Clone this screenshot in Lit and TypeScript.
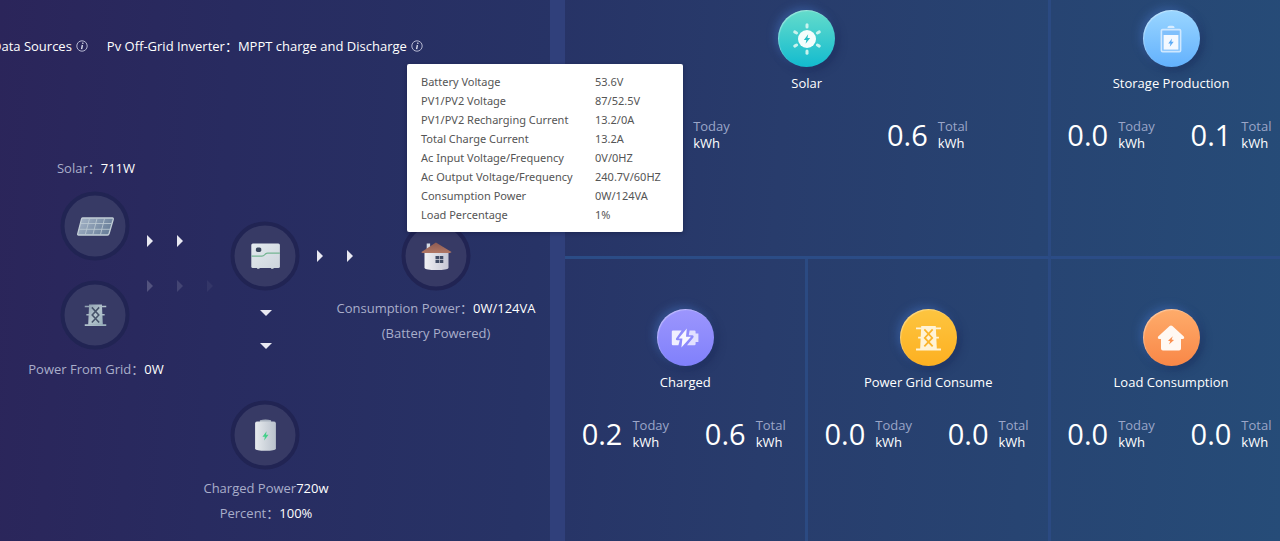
import { LitElement, html, svg, css } from "lit";
import { customElement, property } from "lit/decorators.js";

const boltPath = "M1.5 -6 L-4 1.2 L-0.8 1.2 L-1.8 6 L4 -1.4 L0.6 -1.4 Z";

const pylon = (fill: string, cross: string) => svg`
  <path fill=${fill} d="M5 1 H19 L20 23 H4 Z"/>
  <path fill=${fill} d="M0 2.4 h24 v1.6 h-24z M2 11.4 h20 v1.6 h-20z M0 22.6 h24 v2 h-24z"/>
  <path fill="none" stroke=${cross} stroke-width="1.7" d="M8 4.2 L15.6 12.4 L8 20.6 M16 4.2 L8.4 12.4 L16 20.6"/>`;

const infoIcon = html`
  <svg viewBox="0 0 12 12" width="12" height="12" aria-hidden="true">
    <circle cx="6" cy="6" r="5.2" fill="none" stroke="#b4b6d0" stroke-width="1"/>
    <path d="M6.9 2.6 L6.7 3.8 M6.4 5 L5.6 9.2" stroke="#d8daea" stroke-width="1.4" fill="none"/>
  </svg>`;

const nodeIcons: Record<string, unknown> = {
  solar: html`
    <svg viewBox="0 0 38 20" width="38" height="20" aria-hidden="true">
      <defs><linearGradient id="pv" x1="0" y1="0" x2="1" y2="0.4">
        <stop offset="0" stop-color="#a9b7ca"/><stop offset="1" stop-color="#6b819b"/>
      </linearGradient></defs>
      <path d="M6 1.5 H36 Q37 1.5 36.7 3 L32.6 17 Q32.2 18.5 31 18.5 H2 Q0.9 18.5 1.2 17.3 L5 2.6 Q5.2 1.5 6 1.5Z"
        fill="url(#pv)" stroke="#c2ced6" stroke-width="1.3"/>
      <path d="M4 7 H35 M2.6 12.8 H33.6 M13 2 L8.8 18 M20.5 2 L16.4 18 M28 2 L24 18" stroke="#b9c6d0" stroke-width="0.9" fill="none"/>
    </svg>`,
  grid: html`
    <svg viewBox="0 0 24 25" width="22" height="23" aria-hidden="true">
      <defs><linearGradient id="tw" x1="0" y1="0" x2="1" y2="1" gradientUnits="objectBoundingBox">
        <stop offset="0" stop-color="#8c9eae"/><stop offset="0.5" stop-color="#b4c4cd"/><stop offset="1" stop-color="#98afba"/>
      </linearGradient></defs>
      ${pylon("url(#tw)", "#47536a")}
    </svg>`,
  inverter: html`
    <svg viewBox="0 0 30 28" width="30" height="28" aria-hidden="true">
      <defs><linearGradient id="inv" x1="0" y1="0" x2="1" y2="1">
        <stop offset="0" stop-color="#e4ebef"/><stop offset="1" stop-color="#cdd4dc"/>
      </linearGradient></defs>
      <path fill="#aeb6c2" d="M6.6 24 h2.4 v2.6 h-2.4z M20.6 24 h2.4 v2.6 h-2.4z"/>
      <rect x="0.8" y="1" width="28.6" height="24.6" rx="1.6" fill="url(#inv)"/>
      <path d="M1 13.6 H11.4 Q13 13.6 14 12.4 Q15.2 10.6 17 10.6 H29.4" fill="none" stroke="#74b592" stroke-width="1.1"/>
      <rect x="5.4" y="5" width="5.4" height="4.4" rx="1.6" fill="#39465c"/>
    </svg>`,
  house: html`
    <svg viewBox="0 0 32 30" width="32" height="30" aria-hidden="true">
      <defs>
        <linearGradient id="wall" x1="0" y1="0" x2="1" y2="0">
          <stop offset="0" stop-color="#f1f1f4"/><stop offset="1" stop-color="#c5c6d4"/>
        </linearGradient>
        <linearGradient id="roof" x1="0" y1="0" x2="0" y2="1">
          <stop offset="0" stop-color="#8d5a52"/><stop offset="1" stop-color="#b17764"/>
        </linearGradient>
      </defs>
      <path fill="url(#wall)" d="M4 11 H28 V26.4 Q27 28.4 16 28.4 Q5 28.4 4 26.4Z"/>
      <rect x="6.2" y="2" width="3.4" height="8" fill="#d5dbe4"/>
      <path fill="url(#roof)" d="M15.4 1 L31 10.6 Q31 11.4 29 11.4 H2.6 Q0.6 11.4 1 10.4Z"/>
      <path fill="#414c66" d="M15 14.6 h3.6 v3.2 h-3.6z M19.2 14.6 h3.6 v3.2 h-3.6z M15 18.4 h3.6 v3.2 h-3.6z M19.2 18.4 h3.6 v3.2 h-3.6z"/>
    </svg>`,
  battery: html`
    <svg viewBox="0 0 22 33" width="22" height="33" aria-hidden="true">
      <defs><linearGradient id="cell" x1="0" y1="0" x2="1" y2="0">
        <stop offset="0" stop-color="#e6eaed"/><stop offset="1" stop-color="#b9c1cc"/>
      </linearGradient></defs>
      <path fill="#a9b2bf" d="M5.4 1.8 Q11 0 16.6 1.8 V5 H5.4Z"/>
      <path fill="url(#cell)" d="M0.6 4.4 Q1 3 3 3 H19 Q21 3 21.4 4.4 V30.4 Q20.6 32.2 11 32.2 Q1.4 32.2 0.6 30.4Z"/>
      <path transform="translate(11 17.4) scale(0.76)" fill="#43d089" d=${boltPath}/>
    </svg>`,
};

const cardIcons: Record<string, unknown> = {
  solar: html`
    <svg viewBox="-16 -16 32 32" width="32" height="32" aria-hidden="true">
      <g stroke="#c9f3ee" stroke-width="3" stroke-linecap="round">
        ${[0, 60, 120, 180, 240, 300].map((a) => svg`<path transform="rotate(${a})" d="M0 -14.2 V-12"/>`)}
      </g>
      <circle r="9" fill="#f4fdfc"/>
      <path transform="scale(0.78)" fill="#27bfc6" d=${boltPath}/>
    </svg>`,
  storage: html`
    <svg viewBox="0 0 22 28" width="22" height="28" aria-hidden="true">
      <path fill="#d9edff" d="M7.4 3 Q7.4 0.8 9.6 0.8 H12.4 Q14.6 0.8 14.6 3Z"/>
      <rect x="1.4" y="4.6" width="19.2" height="22" rx="1.2" fill="#7fc0fc" stroke="#cfe8ff" stroke-width="1.6"/>
      <rect x="3.6" y="10" width="14.8" height="14.6" fill="#f3f9ff"/>
      <path transform="translate(11 17.6) scale(0.68)" fill="#5aaaf6" d=${boltPath}/>
    </svg>`,
  charged: html`
    <svg viewBox="0 0 28 20" width="28" height="20" aria-hidden="true">
      <path fill="#f0efff" d="M0.8 3.6 Q0.8 2.4 2 2.4 H10.6 L5 10.4 Q4.4 12 6 12.2 H8.8 L7.4 17.2 H2 Q0.8 17.2 0.8 16Z"/>
      <path fill="#e2e0ff" d="M18.6 2.4 H23.4 Q24.6 2.4 24.6 3.6 V5.6 H27.4 V14 H24.6 V16 Q24.6 17.2 23.4 17.2 H16 L22.4 9.4 Q23.4 7.6 21.6 7.2 H17.8Z"/>
      <path fill="#f8f7ff" d="M15.8 0.6 L7.6 10.4 H11.4 L10.4 19.4 L20 8.8 H15Z"/>
    </svg>`,
  grid: html`
    <svg viewBox="0 0 24 25" width="25" height="26" aria-hidden="true">${pylon("#fff3d6", "#fbb52c")}</svg>`,
  load: html`
    <svg viewBox="0 0 28 26" width="28" height="26" aria-hidden="true">
      <path fill="#fff8f3" d="M12.6 1 Q14 0.2 15.4 1 L26.8 11.4 Q28 13.6 25.6 14 H24 V23.6 Q24 25.6 22 25.6 H6 Q4 25.6 4 23.6 V14 H2.4 Q0 13.6 1.2 11.4Z"/>
      <path transform="translate(14 15.4) rotate(10) scale(0.72)" fill="#fa8f50" d=${boltPath}/>
    </svg>`,
};

@customElement("energy-card")
class EnergyCard extends LitElement {
  @property() name = "";
  @property() icon = "";
  @property() today = "";
  @property() total = "";

  static styles = css`
    :host { display: block; }
    .card { display: flex; flex-direction: column; align-items: center; padding-top: 50px; }
    .badge {
      display: flex; align-items: center; justify-content: center;
      width: 57px; height: 57px; border-radius: 50%;
      box-shadow: -3px -3px 9px rgba(72, 118, 196, 0.45), 3px 3px 9px rgba(22, 34, 80, 0.5),
        inset 1px 1px 1px rgba(255, 255, 255, 0.35);
    }
    .solar { background: linear-gradient(#65dccb, #12bbcf); }
    .storage { background: linear-gradient(#9ad6ff, #63b1fd); }
    .charged { background: linear-gradient(#9c96fd, #8080fb); }
    .grid { background: linear-gradient(#fdc540, #fdb021); }
    .load { background: linear-gradient(#feac6b, #f98747); }
    .name { margin: 6px 0 0; font-size: 13px; line-height: 20px; font-weight: 400; color: #fff; }
    .stats { display: flex; align-self: stretch; margin-top: 22px; }
    .stat { flex: 1; display: flex; align-items: center; justify-content: center; gap: 10px; }
    .value { font-size: 29px; line-height: 40px; color: #fff; }
    .caption { display: flex; flex-direction: column; font-size: 13px; line-height: 17px; color: #9ba6c8; }
    .unit { color: #fff; }
  `;

  stat(value: string, label: string) {
    return html`<div class="stat">
      <span class="value">${value}</span>
      <span class="caption"><span>${label}</span><span class="unit">kWh</span></span>
    </div>`;
  }

  render() {
    return html`<article class="card">
      <div class="badge ${this.icon}">${cardIcons[this.icon]}</div>
      <h2 class="name">${this.name}</h2>
      <div class="stats">${this.stat(this.today, "Today")}${this.stat(this.total, "Total")}</div>
    </article>`;
  }
}

const readings = [
  ["Battery Voltage", "53.6V"],
  ["PV1/PV2 Voltage", "87/52.5V"],
  ["PV1/PV2 Recharging Current", "13.2/0A"],
  ["Total Charge Current", "13.2A"],
  ["Ac Input Voltage/Frequency", "0V/0HZ"],
  ["Ac Output Voltage/Frequency", "240.7V/60HZ"],
  ["Consumption Power", "0W/124VA"],
  ["Load Percentage", "1%"],
];

@customElement("app-root")
class AppRoot extends LitElement {
  static styles = css`
    :host {
      display: block;
      font-family: "Open Sans", "Noto Sans CJK SC", sans-serif;
      font-size: 13px;
      line-height: 20px;
      color: #fff;
    }
    .page {
      display: flex; height: 100vh; min-height: 541px; overflow: hidden;
      background: linear-gradient(94deg, #2b255a 0%, #282b60 18%, #273366 42%, #283c6c 60%, #264c78 100%);
    }
    .flow { position: relative; flex: 0 0 43%; }
    .head { display: flex; gap: 19px; margin: 36px 0 0 -8px; white-space: nowrap; }
    .source { display: flex; align-items: center; gap: 4px; }
    .info { display: flex; padding: 0; border: 0; background: none; cursor: pointer; }

    .node {
      position: absolute; transform: translate(-50%, -50%); box-sizing: border-box;
      display: flex; align-items: center; justify-content: center;
      width: 69px; height: 69px; border-radius: 50%;
      border: 4px solid #212453; background: #373a65;
    }
    .label { position: absolute; transform: translate(-50%, -50%); white-space: nowrap; text-align: center; line-height: 25px; color: #a9aeca; }
    .label b { font-weight: 400; color: #fff; }
    .at-solar { left: 95px; top: 226px; }
    .at-grid { left: 95px; top: 315px; }
    .at-inverter { left: 265px; top: 256px; }
    .at-house { left: 436px; top: 256px; }
    .at-battery { left: 265px; top: 435px; }
    .label.solar { left: 96px; top: 168px; }
    .label.grid { left: 96px; top: 369px; }
    .label.house { left: 436px; top: 321px; }
    .label.battery { left: 266px; top: 501px; }

    .arrows { position: absolute; display: flex; gap: 24px; }
    .arrows i { width: 0; height: 0; border: solid transparent; border-width: 6px 0 6px 6px; border-left-color: #e9e9f2; }
    .arrows .faint { opacity: 0.22; }
    .arrows .fainter { opacity: 0.14; }
    .arrows .faintest { opacity: 0.06; }
    .arrows.from-solar { left: 147px; top: 235px; }
    .arrows.from-grid { left: 147px; top: 280px; }
    .arrows.to-house { left: 317px; top: 250px; }
    .arrows.to-battery { left: 260px; top: 310px; flex-direction: column; gap: 27px; }
    .arrows.to-battery i { border-width: 6px 6px 0 6px; border-color: #e9e9f2 transparent transparent; }

    .cards {
      flex: 1; display: grid; grid-template-columns: repeat(3, 1fr); grid-auto-rows: 299px;
      margin: -40px -14px 0 0; border-left: 15px solid #30407b;
    }
    .tile { border-right: 3px solid #2b4a82; border-bottom: 3px solid #2b4c86; }
    .wide { grid-column: span 2; }

    .tip {
      position: absolute; left: 407px; top: 64px; z-index: 2; box-sizing: border-box;
      width: 276px; padding: 8px 14px; border-radius: 2px; background: #fff; white-space: nowrap;
      box-shadow: 0 1px 4px rgba(10, 15, 50, 0.4);
    }
    .tip table { border-collapse: collapse; width: 100%; font-family: "Noto Sans", "Open Sans", sans-serif; font-size: 11px; line-height: 19px; color: #555; }
    .tip th { width: 174px; padding: 0; font-weight: 400; text-align: left; }
    .tip td { padding: 0; }
  `;

  render() {
    return html`<main class="page">
      <section class="flow">
        <header class="head">
          <span class="source">Data Sources<button class="info" aria-label="About data sources">${infoIcon}</button></span>
          <span class="source">Pv Off-Grid Inverter：MPPT charge and Discharge<button class="info" aria-label="Inverter readings" aria-describedby="tip">${infoIcon}</button></span>
        </header>

        <div class="label solar">Solar：<b>711W</b></div>
        <div class="node at-solar">${nodeIcons.solar}</div>
        <div class="node at-grid">${nodeIcons.grid}</div>
        <div class="label grid">Power From Grid：<b>0W</b></div>
        <div class="node at-inverter">${nodeIcons.inverter}</div>
        <div class="node at-house">${nodeIcons.house}</div>
        <div class="label house">Consumption Power：<b>0W/124VA</b><br>(Battery Powered)</div>
        <div class="node at-battery">${nodeIcons.battery}</div>
        <div class="label battery">Charged Power<b>720w</b><br>Percent：<b>100%</b></div>

        <div class="arrows from-solar"><i></i><i></i></div>
        <div class="arrows from-grid"><i class="faint"></i><i class="fainter"></i><i class="faintest"></i></div>
        <div class="arrows to-house"><i></i><i></i></div>
        <div class="arrows to-battery"><i></i><i></i></div>

        <div class="tip" id="tip" role="tooltip">
          <table>
            ${readings.map(([name, value]) => html`<tr><th scope="row">${name}</th><td>${value}</td></tr>`)}
          </table>
        </div>
      </section>

      <section class="cards">
        <energy-card class="tile wide" name="Solar" icon="solar" today="0.5" total="0.6"></energy-card>
        <energy-card class="tile" name="Storage Production" icon="storage" today="0.0" total="0.1"></energy-card>
        <energy-card class="tile" name="Charged" icon="charged" today="0.2" total="0.6"></energy-card>
        <energy-card class="tile" name="Power Grid Consume" icon="grid" today="0.0" total="0.0"></energy-card>
        <energy-card class="tile" name="Load Consumption" icon="load" today="0.0" total="0.0"></energy-card>
      </section>
    </main>`;
  }
}
